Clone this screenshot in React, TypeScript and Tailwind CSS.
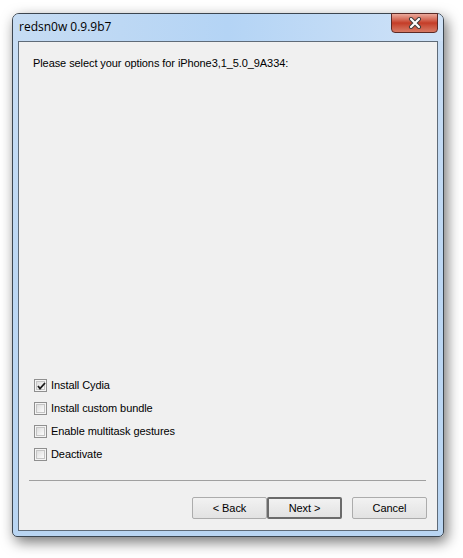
import { useState } from "react";

const options = [
  "Install Cydia",
  "Install custom bundle",
  "Enable multitask gestures",
  "Deactivate",
];

function CheckBox({ checked }: { checked: boolean }) {
  return (
    <span className="block w-[13px] h-[13px] border border-[#8f8f8f] bg-[#f4f4f4] p-[1px]">
      <span className="relative block w-full h-full border border-[#c4c4c4] bg-gradient-to-br from-[#dedede] to-[#fbfbfb]">
        {checked && (
          <svg
            className="absolute left-[0px] top-[0px]"
            width="9"
            height="9"
            viewBox="0 0 9 9"
          >
            <path
              d="M1 4 L3 6.5 L8 1"
              fill="none"
              stroke="#1b1b1b"
              strokeWidth="1.8"
            />
          </svg>
        )}
      </span>
    </span>
  );
}

function WinButton({
  label,
  isDefault,
}: {
  label: string;
  isDefault?: boolean;
}) {
  return (
    <button
      className={`h-[22px] w-[75px] text-[11px] text-black rounded-[2px] bg-gradient-to-b from-[#f2f2f2] to-[#e2e2e2] ${
        isDefault
          ? "border-2 border-[#6b6b6b]"
          : "border border-[#acacac]"
      }`}
    >
      {label}
    </button>
  );
}

export default function App() {
  const [checked, setChecked] = useState([true, false, false, false]);

  return (
    <div
      className="w-[463px] h-[558px] bg-white overflow-hidden pt-[13px] pl-[12px]"
      style={{ fontFamily: '"Liberation Sans", Arial, sans-serif' }}
    >
      {/* window frame */}
      <div className="relative w-[432px] h-[524px] rounded-t-[7px] rounded-b-[5px] border border-[#3c4650] bg-gradient-to-b from-[#c9def5] via-[#bcd7f3] to-[#b9d5f2] shadow-[3px_5px_14px_rgba(0,0,0,0.55)] flex flex-col">
        {/* title bar */}
        <div className="h-[27px] flex items-start bg-gradient-to-r from-[#c6dcf3] via-[#b4d4f5] to-[#cfe2f7] rounded-t-[6px]">
          <span
            className="ml-[6px] mt-[5px] text-[12px] leading-[16px] text-black"
            style={{ fontFamily: '"Open Sans", "Noto Sans", sans-serif' }}
          >
            redsn0w 0.9.9b7
          </span>
          {/* close button */}
          <div className="ml-auto mr-[5px] -mt-[1px] w-[47px] h-[20px] rounded-b-[4px] border border-[#5c2a26] bg-gradient-to-b from-[#e9a99c] via-[#c43c27] to-[#d77a65] flex items-center justify-center">
            <svg width="14" height="12" viewBox="0 0 14 12">
              <path
                d="M3 2 L11 10 M11 2 L3 10"
                stroke="#3b3b3b"
                strokeWidth="4"
                strokeLinecap="round"
              />
              <path
                d="M3 2 L11 10 M11 2 L3 10"
                stroke="#ffffff"
                strokeWidth="2.2"
                strokeLinecap="round"
              />
            </svg>
          </div>
        </div>

        {/* client area */}
        <div className="mx-[5px] h-[490px] border border-[#5f6b78] bg-[#f0f0f0] flex flex-col tracking-[-0.08px]">
          <p className="mt-[15px] ml-[14px] text-[11px] leading-[13px] text-black">
            Please select your options for iPhone3,1_5.0_9A334:
          </p>

          <div className="flex-1" />

          <div className="flex flex-col ml-[15px]">
            {options.map((opt, i) => (
              <label
                key={opt}
                className="h-[23px] flex items-center gap-[4px] text-[11px] text-black cursor-default"
                onClick={() =>
                  setChecked(checked.map((c, j) => (j === i ? !c : c)))
                }
              >
                <CheckBox checked={checked[i]} />
                <span>{opt}</span>
              </label>
            ))}
          </div>

          <div className="mt-[14px] ml-[10px] w-[397px] h-px bg-[#a0a0a0]" />

          <div className="mt-[16px] mb-[11px] flex justify-end mr-[10px]">
            <WinButton label="< Back" />
            <WinButton label="Next >" isDefault />
            <span className="w-[10px]" />
            <WinButton label="Cancel" />
          </div>
        </div>
      </div>
    </div>
  );
}
